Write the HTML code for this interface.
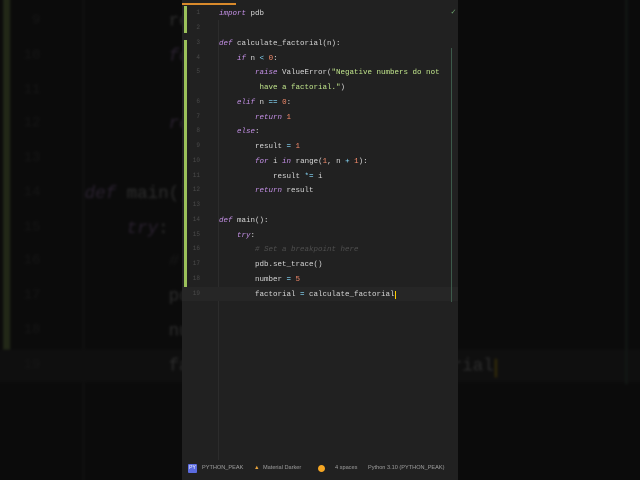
<!DOCTYPE html>
<html><head><meta charset="utf-8"><style>
*{margin:0;padding:0;box-sizing:border-box}
html,body{width:640px;height:480px;overflow:hidden;background:#0b0b0b}
#wrap{position:relative;width:640px;height:480px;overflow:hidden;contain:paint;clip-path:inset(0);background:#0b0b0b}
.ed{position:absolute;left:182px;top:0;width:276px;height:480px;background:#212121;font-family:"Liberation Mono",monospace;font-size:7.5px;color:#d8d8d8}
.bg{transform-origin:138px 240px;transform:scale(2.33);opacity:.16;filter:blur(.6px);background:#0e0e0e}
.ln{position:absolute;left:0;width:18px;text-align:right;color:#4a4a4a;font-size:6px}
.row{position:absolute;left:37px;white-space:pre;height:10px;line-height:10px}
.k{color:#c792ea;font-style:italic}
.s{color:#c3e88d}
.n{color:#f78c6c}
.o{color:#89ddff}
.c{color:#4f4f4f;font-style:italic}
.status{position:absolute;left:0;top:462px;width:276px;height:14px;font-family:"Liberation Sans",sans-serif;font-size:5.6px;color:#a0a0a0;white-space:nowrap}
</style></head><body><div id="wrap">
<div class="ed bg" id="b"></div>
<div class="ed" id="e">
<div style="position:absolute;left:0;top:3px;width:54px;height:2px;background:#d98a2b"></div>
<div style="position:absolute;left:2px;top:6px;width:3px;height:27px;background:#9bc15a"></div>
<div style="position:absolute;left:2px;top:40px;width:3px;height:260px;background:#9bc15a"></div>
<div style="position:absolute;left:36px;top:20px;width:1px;height:440px;background:#2c2c2c"></div>
<div style="position:absolute;left:0;top:287px;width:276px;height:14px;background:#262626"></div>
<div style="position:absolute;left:269px;top:48px;width:1px;height:254px;background:#3c5a4a"></div>
<div style="position:absolute;left:269px;top:7px;color:#6fa86f;font-size:8px">✓</div>
<div class="ln" style="top:9px">1</div><div class="row" style="top:9px"><span class="k">import</span> pdb</div>
<div class="ln" style="top:24px">2</div>
<div class="ln" style="top:39px">3</div><div class="row" style="top:39px"><span class="k">def</span> calculate_factorial(n):</div>
<div class="ln" style="top:54px">4</div><div class="row" style="top:54px">    <span class="k">if</span> n <span class="o">&lt;</span> <span class="n">0</span>:</div>
<div class="ln" style="top:68px">5</div><div class="row" style="top:68px">        <span class="k">raise</span> ValueError(<span class="s">"Negative numbers do not</span></div>
<div class="row" style="top:83px">         <span class="s">have a factorial."</span>)</div>
<div class="ln" style="top:98px">6</div><div class="row" style="top:98px">    <span class="k">elif</span> n <span class="o">==</span> <span class="n">0</span>:</div>
<div class="ln" style="top:113px">7</div><div class="row" style="top:113px">        <span class="k">return</span> <span class="n">1</span></div>
<div class="ln" style="top:127px">8</div><div class="row" style="top:127px">    <span class="k">else</span>:</div>
<div class="ln" style="top:142px">9</div><div class="row" style="top:142px">        result <span class="o">=</span> <span class="n">1</span></div>
<div class="ln" style="top:157px">10</div><div class="row" style="top:157px">        <span class="k">for</span> i <span class="k">in</span> range(<span class="n">1</span>, n <span class="o">+</span> <span class="n">1</span>):</div>
<div class="ln" style="top:172px">11</div><div class="row" style="top:172px">            result <span class="o">*=</span> i</div>
<div class="ln" style="top:186px">12</div><div class="row" style="top:186px">        <span class="k">return</span> result</div>
<div class="ln" style="top:201px">13</div>
<div class="ln" style="top:216px">14</div><div class="row" style="top:216px"><span class="k">def</span> main():</div>
<div class="ln" style="top:231px">15</div><div class="row" style="top:231px">    <span class="k">try</span>:</div>
<div class="ln" style="top:245px">16</div><div class="row" style="top:245px">        <span class="c"># Set a breakpoint here</span></div>
<div class="ln" style="top:260px">17</div><div class="row" style="top:260px">        pdb.set_trace()</div>
<div class="ln" style="top:275px">18</div><div class="row" style="top:275px">        number <span class="o">=</span> <span class="n">5</span></div>
<div class="ln" style="top:290px">19</div><div class="row" style="top:290px">        factorial <span class="o">=</span> calculate_factorial<span style="border-left:1px solid #ffcc00"></span></div>
<div class="status">
<span style="position:absolute;left:6px;top:2px;width:9px;height:9px;background:#5b6be0;color:#fff;font-size:5px;line-height:9px;text-align:center;border-radius:1px">PY</span>
<span style="position:absolute;left:20px;top:3px">PYTHON_PEAK</span>
<span style="position:absolute;left:72px;top:3px;color:#e8a33a">▲</span>
<span style="position:absolute;left:81px;top:3px">Material Darker</span>
<span style="position:absolute;left:136px;top:3px;width:7px;height:7px;border-radius:50%;background:#f5a623"></span>
<span style="position:absolute;left:153px;top:3px">4 spaces</span>
<span style="position:absolute;left:186px;top:3px">Python 3.10 (PYTHON_PEAK)</span>
</div>
</div>
</div>
<script>document.getElementById('b').innerHTML=document.getElementById('e').innerHTML;</script>
</body></html>
